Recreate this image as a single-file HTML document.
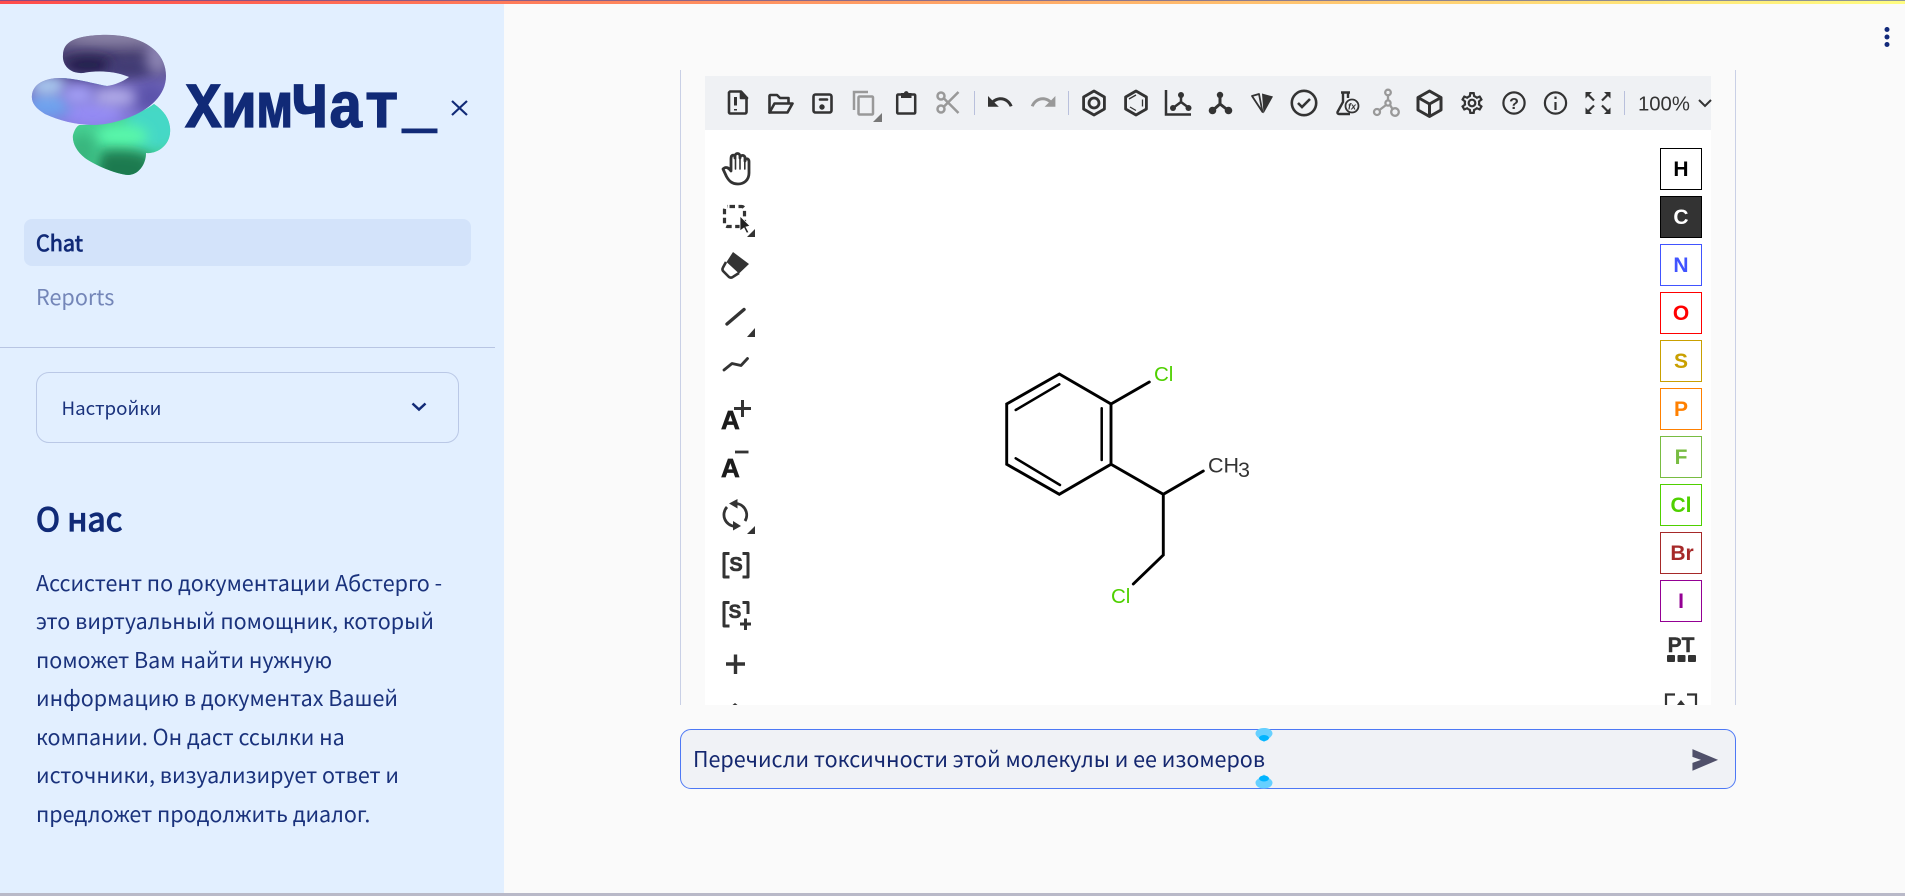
<!DOCTYPE html>
<html lang="ru"><head><meta charset="utf-8"><title>ХимЧат</title>
<style>
html,body{margin:0;padding:0;width:1905px;height:896px;overflow:hidden;background:#fafafa}
body{font-family:"Noto Sans CJK SC","Liberation Sans",sans-serif;color:#112a77;position:relative}
.abs{position:absolute;white-space:nowrap}
#side{position:absolute;left:0;top:0;width:504px;height:893px;background:#e2efff}
#top{position:absolute;left:0;top:0;width:1905px;height:4px;background:linear-gradient(90deg,#ff4b4b,#fffd80)}
#top1{position:absolute;left:0;top:0;width:1905px;height:1px;background:rgba(50,70,170,.55)}
#bot{position:absolute;left:0;top:893px;width:1905px;height:3px;background:#b9b9c8}
.p{left:36px;font-size:21.5px;line-height:30px;color:#1a327c}
svg{position:absolute;left:0;top:0}
svg text{font-family:"Liberation Sans",sans-serif}
</style></head><body>
<div id="side"></div>
<div class="abs" style="left:24px;top:219px;width:447px;height:47px;background:#d3e3fa;border-radius:8px"></div>
<div class="abs" style="left:36px;top:228px;font-size:21.6px;line-height:30px;-webkit-text-stroke:.8px #112a77">Chat</div>
<div class="abs" style="left:36px;top:282px;font-size:21.6px;line-height:30px;color:#7486b8">Reports</div>
<div class="abs" style="left:0;top:347px;width:495px;height:1px;background:#b8c5e3"></div>
<div class="abs" style="left:36px;top:372px;width:421px;height:69px;border:1px solid #bac8e6;border-radius:13px"></div>
<div class="abs" style="left:61.5px;top:393px;font-size:18.7px;line-height:30px;color:#1a327c">Настройки</div>
<div class="abs" style="left:36px;top:498px;font-size:32.3px;line-height:40px;-webkit-text-stroke:1.2px #112a77">О нас</div>
<div class="abs p" style="top:568px">Ассистент по документации Абстерго -</div>
<div class="abs p" style="top:606px">это виртуальный помощник, который</div>
<div class="abs p" style="top:645px">поможет Вам найти нужную</div>
<div class="abs p" style="top:683px">информацию в документах Вашей</div>
<div class="abs p" style="top:722px">компании. Он даст ссылки на</div>
<div class="abs p" style="top:760px">источники, визуализирует ответ и</div>
<div class="abs p" style="top:799px">предложет продолжить диалог.</div>

<div class="abs" style="left:680px;top:70px;width:1px;height:635px;background:#c9d0e6"></div>
<div class="abs" style="left:1735px;top:70px;width:1px;height:635px;background:#c9d0e6"></div>
<div class="abs" style="left:705px;top:76px;width:1006px;height:54px;background:#eff1f4"></div>
<div class="abs" style="left:705px;top:130px;width:1006px;height:575px;background:#fff"></div>

<div class="abs" style="left:680px;top:729px;width:1054px;height:58px;background:#f0f2f6;border:1px solid #4d78f5;border-radius:11px"></div>
<div class="abs" style="left:693px;top:744px;font-size:21.5px;line-height:30px;color:#14276f">Перечисли токсичности этой молекулы и ее изомеров</div>

<svg width="1905" height="896" viewBox="0 0 1905 896">
<defs>
<filter id="b5" x="-60%" y="-60%" width="220%" height="220%"><feGaussianBlur stdDeviation="6"/></filter>
<linearGradient id="gb" x1="0" y1="0" x2="0" y2="1"><stop offset="0" stop-color="#857c9e"/><stop offset=".3" stop-color="#4a4274"/><stop offset=".55" stop-color="#6c62b4"/><stop offset="1" stop-color="#8d84ea"/></linearGradient>
<clipPath id="cp"><path d="M63 55C63 42 75 36 100 35C140 33 166 50 166 76C166 100 140 118 105 124C85 127 62 122 45 114C35 108 31 102 32 95C33 84 45 78 60 78C75 78 95 84 107 86C115 85 124 81 129 77C115 71 98 70 83 73C70 74 62 65 63 55Z"/></clipPath>
<clipPath id="cg"><path d="M154 104C166 112 171 122 170 133C169 145 158 154 146 153C146 165 138 175 128 175C115 174 95 165 85 158C76 151 72 142 73 135C75 128 78 125 80 125C100 125 135 118 154 104Z"/></clipPath>
</defs>
<!-- logo -->
<g clip-path="url(#cg)">
<rect x="60" y="95" width="120" height="90" fill="#46cf92"/>
<ellipse cx="155" cy="125" rx="30" ry="26" fill="#44d8c6" filter="url(#b5)"/>
<ellipse cx="122" cy="136" rx="26" ry="12" fill="#58f6aa" filter="url(#b5)"/>
<path d="M100 152C125 148 140 152 152 157L150 190L95 185Z" fill="#1b7a50" filter="url(#b5)"/>
<ellipse cx="82" cy="152" rx="14" ry="18" fill="#37b67e" filter="url(#b5)"/>
</g>
<path d="M60 78C75 78 95 84 107 86L104 90L70 86Z" fill="#38bfdc"/>
<g clip-path="url(#cp)">
<rect x="25" y="25" width="150" height="110" fill="url(#gb)"/>
<ellipse cx="115" cy="36" rx="50" ry="8" fill="#8a82a6" filter="url(#b5)"/>
<ellipse cx="88" cy="65" rx="26" ry="9" fill="#211b48" filter="url(#b5)"/>
<ellipse cx="130" cy="68" rx="24" ry="8" fill="#3e3870" filter="url(#b5)"/>
<ellipse cx="158" cy="56" rx="12" ry="18" fill="#8b83b2" filter="url(#b5)"/>
<ellipse cx="150" cy="98" rx="18" ry="14" fill="#5b53ab" filter="url(#b5)"/>
<ellipse cx="92" cy="114" rx="30" ry="12" fill="#948bf4" filter="url(#b5)"/>
<ellipse cx="114" cy="97" rx="22" ry="9" fill="#b0aae8" filter="url(#b5)"/>
<ellipse cx="48" cy="106" rx="22" ry="13" fill="#6ea2ee" filter="url(#b5)"/>
<ellipse cx="48" cy="86" rx="18" ry="10" fill="#a8c8ee" filter="url(#b5)"/>
<ellipse cx="78" cy="95" rx="16" ry="10" fill="#a29ef4" filter="url(#b5)"/>
</g>
<text x="185.500" y="127" textLength="214" lengthAdjust="spacingAndGlyphs" stroke="#112a77" stroke-width="1.300" style="font-family:'Liberation Mono',monospace;font-weight:700;font-size:64px" fill="#112a77">ХимЧат</text>
<text x="403" y="127" textLength="33" lengthAdjust="spacingAndGlyphs" stroke="#112a77" stroke-width="2.400" style="font-family:'Liberation Mono',monospace;font-weight:700;font-size:48px" fill="#112a77">_</text>
<path d="M452 101L467 115M467 101L452 115" stroke="#112a77" stroke-width="2.2" fill="none"/>
<path d="M412.500 403.500L419 409.500L425.500 403.500" stroke="#112a77" stroke-width="2.500" fill="none"/>

<!-- toolbar separators -->
<g stroke="#b9c0dc" stroke-width="1"><path d="M974.500 91V115M1068.500 91V115M1624.500 91V115"/></g>

<g fill="none" stroke="#333" stroke-width="2.600" stroke-linejoin="round" stroke-linecap="round">
<!-- new -->
<path d="M730 91.500H741L746.500 97.500V112A1.500 1.500 0 0 1 745 113.500H730A1.300 1.300 0 0 1 729 112V92.500Z"/>
<path d="M741 92V98H747" fill="#333"/>
<path d="M735.500 97V105.500M735.500 109V110.500" stroke-width="3" stroke-linecap="butt"/>
<!-- open -->
<path d="M769.500 112.500V96A1 1 0 0 1 770.500 95H777L780 98H788.500V103"/>
<path d="M769.500 112.500H787.500L792.500 103.500H774.500Z"/>
<!-- save -->
<rect x="813.500" y="94.500" width="18" height="18" rx="2"/>
<path d="M820 99.500H827"/>
<circle cx="822" cy="107" r="1.400" fill="#333"/>
</g>
<g fill="none" stroke="#999" stroke-width="2.500">
<path d="M854 110V92H868"/>
<rect x="858.500" y="96.500" width="14.500" height="18" rx="1"/>
<circle cx="941" cy="96" r="3.500"/><circle cx="941" cy="109" r="3.500"/>
<path d="M944 98.500L958.500 113M944 106.500L958.500 92"/>
</g>
<path d="M882 113V122H873Z" fill="#777"/>
<!-- paste -->
<rect x="897.200" y="94.500" width="18" height="19" rx="1" fill="none" stroke="#333" stroke-width="2.500"/>
<path d="M901 93H904C904.500 90.500 908 90.500 908.500 93H911.500V98H901Z" fill="#333"/>
<!-- undo redo -->
<path transform="translate(985.600 87.600) scale(1.2)" fill="#333" d="M12.500 8c-2.650 0-5.050.99-6.900 2.600L2 7v9h9l-3.620-3.620c1.390-1.160 3.160-1.880 5.120-1.880 3.540 0 6.550 2.310 7.600 5.500l2.370-.78C21.080 11.030 17.150 8 12.500 8z"/>
<path transform="translate(1029 87.600) scale(1.2)" fill="#999" d="M18.400 10.600C16.550 8.990 14.150 8 11.500 8c-4.650 0-8.580 3.030-9.960 7.220L3.900 16c1.050-3.190 4.050-5.500 7.600-5.500 1.950 0 3.730.72 5.120 1.880L13 16h9V7l-3.600 3.600z"/>
<!-- rings -->
<g fill="none" stroke="#333" stroke-width="2.800" stroke-linejoin="round">
<path d="M1094 91L1104.400 97V109L1094 115L1083.600 109V97Z"/><circle cx="1094" cy="103" r="5"/>
<path d="M1136 91L1146.400 97V109L1136 115L1125.600 109V97Z"/>
</g>
<path d="M1129 99L1136 95M1142.500 99.500V106.500M1130 107L1136 110.500" stroke="#333" stroke-width="1.300" fill="none"/>
<!-- layout -->
<path d="M1166 90V114.500H1191" stroke="#333" stroke-width="2.500" fill="none"/>
<path d="M1181 95V102L1173 108M1181 102L1189 108" stroke="#333" stroke-width="2.500" fill="none"/>
<circle cx="1181" cy="95" r="3" fill="#333"/><circle cx="1173" cy="108" r="3" fill="#333"/><circle cx="1188.500" cy="108" r="3" fill="#333"/>
<!-- clean -->
<path d="M1220 95V104L1212 111M1220 104L1229 111" stroke="#333" stroke-width="3" fill="none"/>
<circle cx="1220" cy="95" r="3.200" fill="#333"/><circle cx="1212.500" cy="110.500" r="3.800" fill="#333"/><circle cx="1228.500" cy="110.500" r="3.800" fill="#333"/>
<!-- stereo -->
<path d="M1252 96L1259 94L1262.500 112Z" fill="none" stroke="#333" stroke-width="1.800" stroke-linejoin="round"/>
<path d="M1262 93.500L1273 96.500L1263.500 113.500Z" fill="#333"/>
<!-- check -->
<circle cx="1304" cy="103" r="12.200" fill="none" stroke="#333" stroke-width="2.600"/>
<path d="M1298 103L1302 107L1310 99" fill="none" stroke="#333" stroke-width="2.600"/>
<!-- flask -->
<path d="M1341 92.500H1350M1343 93V102L1337.500 112A1.500 1.500 0 0 0 1339 114H1350M1348 93V98" fill="none" stroke="#333" stroke-width="2.400"/>
<circle cx="1352" cy="106" r="6.500" fill="#eff1f4" stroke="#333" stroke-width="1.800"/>
<text x="1352" y="109.500" text-anchor="middle" font-size="9" font-weight="700" font-style="italic" fill="#333">fx</text>
<!-- atom map -->
<g fill="none" stroke="#999" stroke-width="2.300">
<circle cx="1388" cy="92.500" r="2.800"/><circle cx="1377" cy="112" r="3"/><circle cx="1395" cy="112" r="3.800"/><circle cx="1388" cy="103" r="2.600"/>
<path d="M1388 95.500V100.500M1386 105L1379.500 110M1390 105L1392.500 109"/>
</g>
<!-- 3d -->
<g fill="none" stroke="#333" stroke-width="3" stroke-linejoin="round">
<path d="M1429.500 91L1441 97.500V110L1429.500 116.500L1418 110V97.500Z"/>
<path d="M1418 97.500L1429.500 104L1441 97.500M1429.500 104V116.500"/>
</g>
<!-- gear -->
<path transform="translate(1458.800 89.800) scale(1.1)" fill="#333" d="M19.430 12.980c.04-.32.07-.64.07-.98 0-.34-.03-.66-.07-.98l2.110-1.650c.19-.15.24-.42.12-.64l-2-3.460c-.09-.16-.26-.25-.44-.25-.06 0-.12.01-.17.03l-2.490 1c-.52-.4-1.080-.73-1.690-.98l-.38-2.650C14.460 2.180 14.250 2 14 2h-4c-.25 0-.46.18-.49.42l-.38 2.650c-.61.25-1.170.59-1.690.98l-2.490-1c-.06-.02-.12-.03-.18-.03-.17 0-.34.09-.43.25l-2 3.460c-.13.22-.07.49.12.64l2.110 1.650c-.04.32-.07.65-.07.98 0 .33.03.66.07.98l-2.110 1.650c-.19.15-.24.42-.12.64l2 3.460c.09.16.26.25.44.25.06 0 .12-.01.17-.03l2.490-1c.52.4 1.080.73 1.690.98l.38 2.650c.03.24.24.42.49.42h4c.25 0 .46-.18.49-.42l.38-2.650c.61-.25 1.170-.59 1.690-.98l2.490 1c.06.02.12.03.18.03.17 0 .34-.09.43-.25l2-3.460c.12-.22.07-.49-.12-.64l-2.110-1.650zm-1.980-1.710c.04.31.05.52.05.73 0 .21-.02.43-.05.73l-.14 1.130.89.7 1.080.84-.7 1.210-1.270-.51-1.040-.42-.9.68c-.43.32-.84.56-1.250.73l-1.060.43-.16 1.130-.2 1.350h-1.400l-.19-1.350-.16-1.130-1.060-.43c-.43-.18-.83-.41-1.230-.71l-.91-.7-1.060.43-1.270.51-.7-1.210 1.080-.84.89-.7-.14-1.130c-.03-.31-.05-.54-.05-.74s.02-.43.05-.73l.14-1.130-.89-.7-1.080-.84.7-1.210 1.270.51 1.040.42.9-.68c.43-.32.84-.56 1.250-.73l1.060-.43.16-1.130.2-1.350h1.390l.19 1.350.16 1.130 1.060.43c.43.18.83.41 1.230.71l.91.7 1.060-.43 1.270-.51.7 1.210-1.070.85-.89.7.14 1.130zM12 8c-2.210 0-4 1.790-4 4s1.790 4 4 4 4-1.790 4-4-1.790-4-4-4zm0 6c-1.100 0-2-.9-2-2s.9-2 2-2 2 .9 2 2-.9 2-2 2z"/>
<!-- help / info -->
<circle cx="1514" cy="103" r="10.600" fill="none" stroke="#333" stroke-width="2.200"/>
<text x="1514" y="109" text-anchor="middle" font-size="16" font-weight="700" fill="#333">?</text>
<circle cx="1555.500" cy="103" r="10.600" fill="none" stroke="#333" stroke-width="2.200"/>
<path d="M1555.500 102V110M1555.500 96.500V99" stroke="#333" stroke-width="2.200" fill="none"/>
<!-- fullscreen -->
<g fill="#333">
<path d="M1585.500 92H1592L1585.500 98.500Z"/><path d="M1610.500 92H1604L1610.500 98.500Z"/>
<path d="M1585.500 114H1592L1585.500 107.500Z"/><path d="M1610.500 114H1604L1610.500 107.500Z"/>
</g>
<path d="M1588 94.500L1594 100.500M1608 94.500L1602 100.500M1588 111.500L1594 105.500M1608 111.500L1602 105.500" stroke="#333" stroke-width="2.200" fill="none"/>
<text x="1638" y="110.500" font-size="20.300" fill="#333">100%</text>
<path d="M1699 100L1705 106L1711 100" fill="none" stroke="#333" stroke-width="2"/>

<!-- left tools -->
<g fill="none" stroke="#333" stroke-linejoin="round" stroke-linecap="round">
<path stroke-width="2.800" d="M723 169C726 166 729 168 731 171V159C731 154 735 154 735 158V156.500C735 152.500 740 152.500 740 156.500V158C740 154.500 745 154.500 745 158V161C745 158 749 158 749 161.500V173C749 180 744 184 738 184C732 184 729 181 726.500 176.500Z"/>
<path stroke-width="1.600" d="M735.500 158V169M740 158V169M744.800 161V169"/>
<rect x="724.500" y="206.500" width="20" height="20" rx="3" stroke-width="3.200" stroke-linecap="butt" stroke-dasharray="5.500 3.500" stroke-dashoffset="-2"/>
<path stroke-width="3.400" d="M727 324L744 309.500"/>
<path stroke-width="2.800" d="M724 370L732 363.500L741 365.500L747.500 358.500"/>
<path stroke-width="3" stroke-linecap="butt" d="M734 408.500H751M742.500 400V417"/>
<path stroke-width="2.800" stroke-linecap="butt" d="M735 452H748.500"/>
<path stroke-width="2.800" stroke-linecap="butt" d="M735 503.500A11.500 11.500 0 0 1 745 521M727 507A11.500 11.500 0 0 0 735 526.300"/>
<path stroke-width="3" stroke-linecap="butt" stroke-linejoin="round" d="M729.500 553.500H724V577H729.500M742.500 553.500H748V577H742.500"/>
<path stroke-width="3" stroke-linecap="butt" stroke-linejoin="round" d="M729.500 602.500H724V626H729.500M742.500 602.500H748V614"/>
<path stroke-width="3" stroke-linecap="butt" d="M740 624H751M745.500 618.500V630"/>
<path stroke-width="3.400" stroke-linecap="butt" d="M726 664H745M735.500 654.500V674"/>
</g>
<path d="M740 216L750 226L746 227L749 232.500L746.500 233L744 228L740 231Z" fill="#222" stroke="#fff" stroke-width=".8"/>
<g fill="#333">
<path d="M755 229V237H747Z"/><path d="M755 328V337H747Z"/><path d="M755 526V534H747Z"/>
<path d="M733 252L749 264L739 273.500L726.500 262Z"/>
<path d="M729 503.500L737.500 499V508.500ZM741 526L733 521V530.500Z"/>
<path d="M735 703L732.500 705H737.500Z"/>
</g>
<path d="M726 262L723 267.500Q721.500 270 724 272L729 277Q731.500 278.500 733.500 276.500L739 273" fill="none" stroke="#333" stroke-width="2.600"/>
<text x="721" y="429" font-size="26" font-weight="700" fill="#1c1c1c" stroke="#1c1c1c" stroke-width=".7">A</text>
<text x="721" y="477" font-size="26" font-weight="700" fill="#1c1c1c" stroke="#1c1c1c" stroke-width=".7">A</text>
<text x="736" y="571" text-anchor="middle" font-size="20" font-weight="700" fill="#333" stroke="#333" stroke-width=".6">S</text>
<text x="735" y="618" text-anchor="middle" font-size="19" font-weight="700" fill="#333" stroke="#333" stroke-width=".6">S</text>

<!-- atoms -->
<g style="font-weight:700" font-size="21" text-anchor="middle">
<rect x="1660.500" y="148.500" width="41" height="41" fill="#fff" stroke="#000"/>
<text x="1681" y="176" fill="#000">H</text>
<rect x="1660.500" y="196.500" width="41" height="41" fill="#333" stroke="#000"/>
<text x="1681" y="224" fill="#fff">C</text>
<rect x="1660.500" y="244.500" width="41" height="41" fill="#fff" stroke="#4154ff"/>
<text x="1681" y="272" fill="#4154ff">N</text>
<rect x="1660.500" y="292.500" width="41" height="41" fill="#fff" stroke="#f00"/>
<text x="1681" y="320" fill="#f00">O</text>
<rect x="1660.500" y="340.500" width="41" height="41" fill="#fff" stroke="#c9a000"/>
<text x="1681" y="368" fill="#c9a000">S</text>
<rect x="1660.500" y="388.500" width="41" height="41" fill="#fff" stroke="#ff8000"/>
<text x="1681" y="416" fill="#ff8000">P</text>
<rect x="1660.500" y="436.500" width="41" height="41" fill="#fff" stroke="#78bc42"/>
<text x="1681" y="464" fill="#78bc42">F</text>
<rect x="1660.500" y="484.500" width="41" height="41" fill="#fff" stroke="#4fd000"/>
<text x="1681" y="512" fill="#4fd000">Cl</text>
<rect x="1660.500" y="532.500" width="41" height="41" fill="#fff" stroke="#a62929"/>
<text x="1682" y="560" fill="#a62929">Br</text>
<rect x="1660.500" y="580.500" width="41" height="41" fill="#fff" stroke="#940094"/>
<text x="1681" y="608" fill="#940094">I</text>
<text x="1681" y="652" fill="#333" stroke="#333" stroke-width=".4">PT</text>
</g>
<g fill="#333"><rect x="1667" y="655" width="8" height="7" rx="1"/><rect x="1677.500" y="655" width="8" height="7" rx="1"/><rect x="1688" y="655" width="8" height="7" rx="1"/></g>
<path d="M1666 705V694.500H1675M1696 705V694.500H1687" fill="none" stroke="#333" stroke-width="2.200"/>
<path d="M1681 700L1677 705H1685Z" fill="#333"/>

<!-- molecule -->
<g fill="none" stroke="#000" stroke-width="2.900" stroke-linecap="round" stroke-linejoin="miter">
<path d="M1059.300 374L1111 404V464.300L1059.300 494.300L1006.700 464.300V404Z"/>
<path stroke-width="2.500" d="M1015.700 410L1059.300 384.300M1101.700 408.300V460M1015.700 458.300L1060 485"/>
<path d="M1111 404L1149.300 382M1111 464.300L1163.300 494.300L1203.300 471M1163.300 494.300V555L1133.300 584"/>
</g>
<g font-size="20.500">
<text x="1154" y="381" fill="#4fd000">Cl</text>
<text x="1111" y="603" fill="#4fd000">Cl</text>
<text x="1208" y="472.500" font-size="21.500" fill="#333">CH</text>
<text x="1238" y="477" font-size="21.500" fill="#333">3</text>
</g>

<!-- caret handles -->
<g>
<path d="M1264 728C1270 728 1272.500 731 1272.500 733.500C1272.500 736.500 1268 739 1264 742C1260 739 1255.500 736.500 1255.500 733.500C1255.500 731 1258 728 1264 728Z" fill="#66d0ff"/>
<ellipse cx="1264" cy="738" rx="5" ry="3" fill="#00b4ff"/>
<path d="M1264 788.500C1270 788.500 1272.500 785.500 1272.500 782.500C1272.500 780 1268 777.500 1264 774.500C1260 777.500 1255.500 780 1255.500 782.500C1255.500 785.500 1258 788.500 1264 788.500Z" fill="#66d0ff"/>
<ellipse cx="1264" cy="778.500" rx="5" ry="3" fill="#00b4ff"/>
</g>
<!-- send -->
<path transform="translate(1690 745.500) scale(1.22 1.2)" fill="#50506a" d="M2.010 21L23 12 2.010 3 2 9.500l7 2.500-7 2.500z"/>
<!-- menu -->
<g fill="#12297a"><circle cx="1887" cy="29.500" r="2.500"/><circle cx="1887" cy="37" r="2.500"/><circle cx="1887" cy="44.500" r="2.500"/></g>
</svg>
<div id="top"></div>
<div id="top1"></div>
<div id="bot"></div>
</body></html>
